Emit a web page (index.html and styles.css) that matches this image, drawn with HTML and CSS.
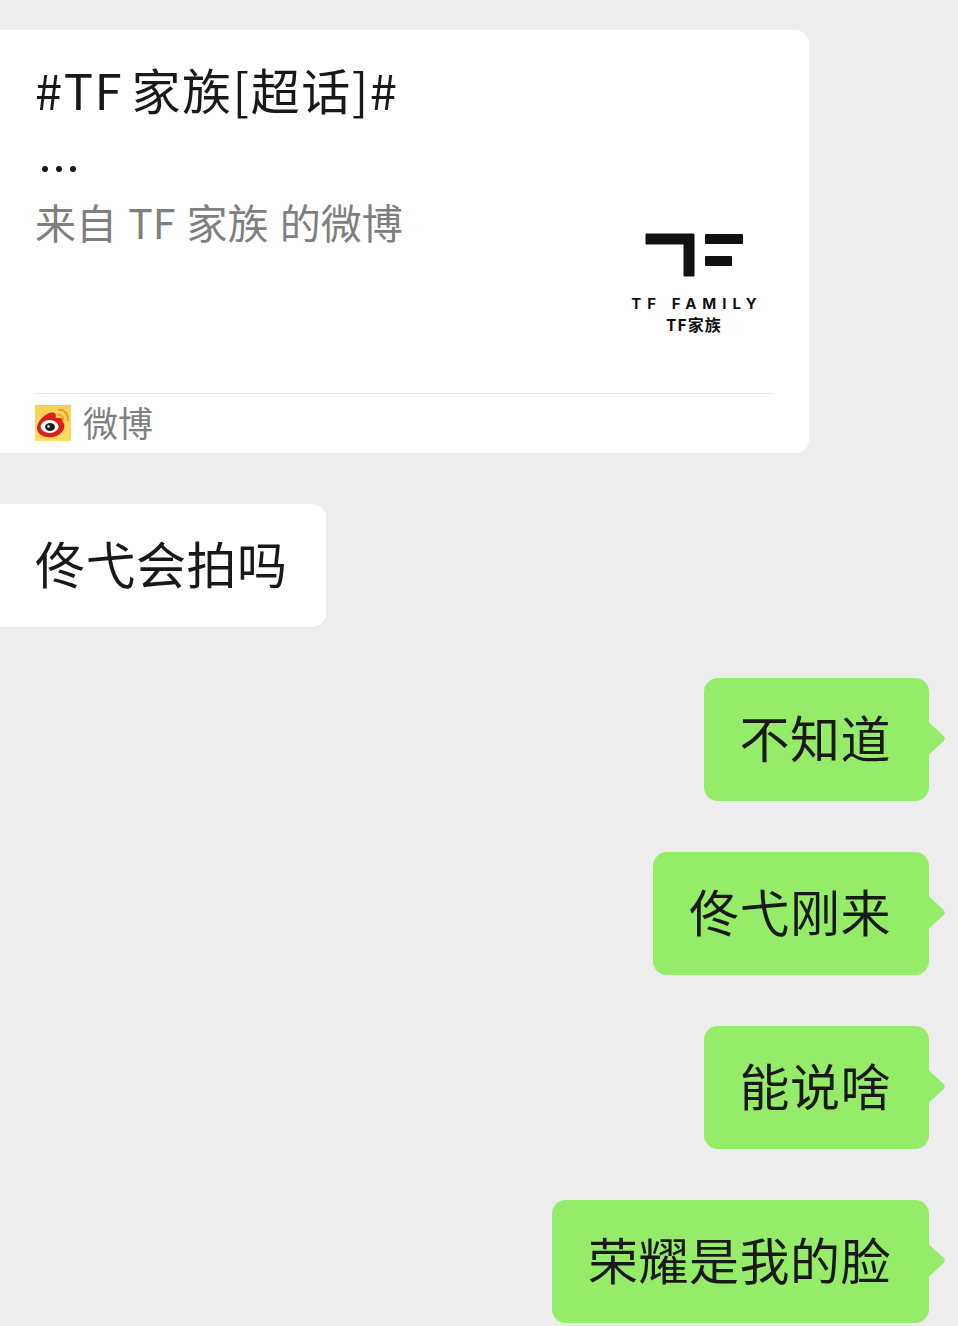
FILE: index.html
```html
<!DOCTYPE html>
<html lang="zh-CN">
<head>
    <meta charset="UTF-8">
    <title>聊天</title>
    <link rel="stylesheet" href="styles.css">
</head>
<body>
    <div class="chat">

        <!-- Shared weibo card -->
        <div class="card">
            <div class="card-body">
                <div class="card-text">
                    <div class="card-title">#TF 家族[超话]#</div>
                    <div class="card-dots">
                        <span class="dot"></span>
                        <span class="dot"></span>
                        <span class="dot"></span>
                    </div>
                    <div class="card-desc">来自 TF 家族 的微博</div>
                </div>
                <div class="logo">
                    <svg class="logo-mark" viewBox="0 0 98 44" width="98" height="44">
                        <path d="M1 1H49V43H39V11H1Z" fill="#111" stroke="#111" stroke-width="1" stroke-linejoin="round"/>
                        <rect x="60" y="1" width="38" height="10" rx="1" fill="#111"/>
                        <rect x="60" y="23" width="27" height="10" rx="1" fill="#111"/>
                    </svg>
                    <div class="logo-en">TF FAMILY</div>
                    <div class="logo-cn">TF家族</div>
                </div>
            </div>
            <div class="card-footer">
                <svg class="weibo-icon" viewBox="0 0 36 36" width="36" height="36">
                    <defs>
                        <linearGradient id="weibo-bg" x1="0" y1="0" x2="0" y2="1">
                            <stop offset="0" stop-color="#f8cf55"/>
                            <stop offset="1" stop-color="#fbdc62"/>
                        </linearGradient>
                    </defs>
                    <rect width="36" height="36" fill="url(#weibo-bg)"/>
                    <path d="M2 23C2 17 9 9 16 7.500C21 7 21.500 10 20.500 13C25 12 28 13 27.500 17C30 18 30 23 28 25.500C24 32 15 33.500 9 31.500C5 30 2 27 2 23Z" fill="#d8201c"/>
                    <ellipse cx="14.600" cy="21.500" rx="9" ry="6.500" fill="#fff"/>
                    <ellipse cx="15" cy="22" rx="5" ry="4" fill="#1e1e1e"/>
                    <circle cx="13.500" cy="21.500" r="1.200" fill="#fff"/>
                    <path d="M23 5C29 4 34 9 32.500 16" fill="none" stroke="#e99a2b" stroke-width="2"/>
                    <path d="M23 10C26 9 29 12 28 16" fill="none" stroke="#e99a2b" stroke-width="2"/>
                </svg>
                <span class="card-source">微博</span>
            </div>
        </div>

        <div class="bubble">佟弋会拍吗</div>

        <div class="bubble me">不知道</div>
        <div class="bubble me">佟弋刚来</div>
        <div class="bubble me">能说啥</div>
        <div class="bubble me">荣耀是我的脸</div>
    </div>
</body>
</html>
```
FILE: styles.css
```css
body {
    margin: 0;
    background-color: #ededed;
    font-family: "Noto Sans CJK SC", "Noto Sans", sans-serif;
    color: #191919;
}

.chat {
    display: flex;
    flex-direction: column;
    align-items: flex-start;
    gap: 51px;
    padding: 30px 29px 0 0;
}

.card {
    width: 809px;
    height: 423px;
    box-sizing: border-box;
    padding: 0 36px 0 35px;
    display: flex;
    flex-direction: column;
    background-color: #fff;
    border-radius: 0 14px 14px 0;
}

.card-body {
    flex: 1;
    display: flex;
    justify-content: space-between;
}

.card-text {
    padding-top: 28px;
}

.card-title {
    font-size: 49px;
    line-height: 62px;
    letter-spacing: 1.500px;
    word-spacing: -4px;
    white-space: nowrap;
}

.card-dots {
    height: 72px;
    padding: 26px 0 0 7px;
    box-sizing: border-box;
    display: flex;
    align-items: center;
    gap: 8px;
}

.dot {
    width: 6px;
    height: 6px;
    border-radius: 50%;
    background-color: #191919;
}

.card-desc {
    font-size: 41px;
    line-height: 58px;
    word-spacing: 2px;
    color: #7f7f7f;
    white-space: nowrap;
}

.logo {
    width: 130px;
    margin: 203px 14px 0 0;
    display: flex;
    flex-direction: column;
    align-items: center;
}

.logo-mark {
    display: block;
}

.logo-en {
    margin-top: 18px;
    margin-right: -6px;
    font-family: "Inter", sans-serif;
    font-size: 15px;
    line-height: 18px;
    font-weight: 700;
    letter-spacing: 6px;
    white-space: nowrap;
    color: #111;
}

.logo-cn {
    margin-top: 2px;
    font-size: 16px;
    line-height: 18px;
    font-weight: 700;
    letter-spacing: 1px;
    color: #111;
}

.card-footer {
    height: 59px;
    display: flex;
    align-items: center;
    gap: 12px;
    border-top: 1px solid #e5e5e5;
}

.weibo-icon {
    display: block;
    margin-top: -1px;
}

.card-source {
    font-size: 35px;
    line-height: 59px;
    margin-top: -5px;
    color: #7f7f7f;
}

.bubble {
    height: 123px;
    box-sizing: border-box;
    padding: 0 38px 8px 35px;
    display: flex;
    align-items: center;
    font-size: 50px;
    letter-spacing: 0.500px;
    background-color: #fff;
    border-radius: 0 14px 14px 0;
}

.bubble.me {
    position: relative;
    align-self: flex-end;
    padding: 0 38px 8px 36px;
    background-color: #95ec69;
    border-radius: 14px;
}

.bubble.me::after {
    content: "";
    position: absolute;
    top: 50%;
    left: 100%;
    width: 16px;
    height: 32px;
    margin-top: -17px;
    background-color: #95ec69;
    clip-path: polygon(0 0, 92% 42%, 100% 50%, 92% 58%, 0 100%);
}
```
